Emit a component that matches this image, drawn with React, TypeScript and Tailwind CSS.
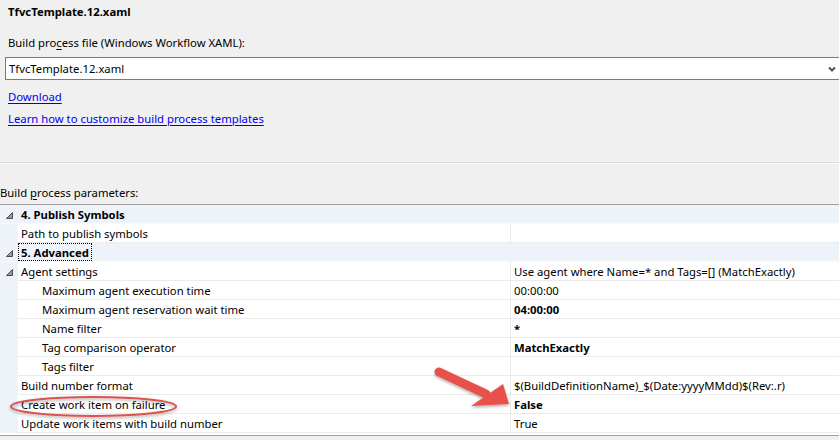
import type { ReactNode } from 'react';

type Row = {
  name: string;
  value?: string;
  bold?: boolean;
  level?: 0 | 1 | 2;
  expander?: boolean;
  category?: boolean;
  focused?: boolean;
};

const rows: Row[] = [
  { name: '4. Publish Symbols', category: true, expander: true },
  { name: 'Path to publish symbols', value: '' },
  { name: '5. Advanced', category: true, expander: true, focused: true },
  {
    name: 'Agent settings',
    value: 'Use agent where Name=* and Tags=[] (MatchExactly)',
    expander: true,
  },
  { name: 'Maximum agent execution time', value: '00:00:00', level: 1 },
  { name: 'Maximum agent reservation wait time', value: '04:00:00', level: 1, bold: true },
  { name: 'Name filter', value: '*', level: 1, bold: true },
  { name: 'Tag comparison operator', value: 'MatchExactly', level: 1, bold: true },
  { name: 'Tags filter', value: '', level: 1 },
  { name: 'Build number format', value: '$(BuildDefinitionName)_$(Date:yyyyMMdd)$(Rev:.r)' },
  { name: 'Create work item on failure', value: 'False', bold: true },
  { name: 'Update work items with build number', value: 'True' },
];

const Expander = () => (
  <svg width="7" height="7" viewBox="0 0 7 7" className="mt-[2px]">
    <polygon points="6.5,0.5 6.5,6.5 0.5,6.5" fill="#9a9a9a" stroke="#4a4a4a" strokeWidth="1" />
  </svg>
);

const GridRow = ({ row }: { row: Row }) => {
  if (row.category) {
    return (
      <div className="flex h-[19px] bg-[#eef3fa] border-b border-[#f7f9fc]">
        <div className="w-[18px] shrink-0 flex items-center justify-center">
          {row.expander && <Expander />}
        </div>
        <div className="flex items-center">
          <span
            className={
              'font-bold px-[2px] pt-[1px] leading-[15px] border ' +
              (row.focused ? 'border-dotted border-black' : 'border-transparent')
            }
          >
            {row.name}
          </span>
        </div>
      </div>
    );
  }
  return (
    <div className="flex h-[19px]">
      <div className="w-[18px] shrink-0 bg-[#eef3fa] flex items-center justify-center">
        {row.expander && <Expander />}
      </div>
      <div
        className={
          'w-[492px] shrink-0 bg-white border-b border-[#ebebeb] flex items-center pt-[2px] ' +
          (row.level === 1 ? 'pl-[24px]' : 'pl-[3px]')
        }
      >
        {row.name}
      </div>
      <div
        className={
          'flex-1 bg-white border-b border-l border-[#ebebeb] flex items-center pt-[2px] pl-[3px] whitespace-nowrap ' +
          (row.bold ? 'font-bold' : '')
        }
      >
        {row.value}
      </div>
    </div>
  );
};

const Link = ({ children }: { children: ReactNode }) => (
  <a href="#" className="text-[#0000ee] underline underline-offset-[2px] leading-[16px]">
    {children}
  </a>
);

export default function App() {
  return (
    <div className="relative w-[839px] h-[440px] overflow-hidden bg-[#f0f0f0] text-black text-[11.3px] leading-[16px] font-['Segoe_UI','Noto_Sans',sans-serif]">
      {/* Template header */}
      <div className="pl-[8px] pt-[4px]">
        <div className="font-bold">TfvcTemplate.12.xaml</div>
        <div className="mt-[15px]">
          Build pro<span className="underline underline-offset-[2px]">c</span>ess file (Windows Workflow XAML):
        </div>
        <div className="mt-[6px] -ml-[3px] w-[840px] h-[23px] bg-white border border-[#7a7a7a] flex items-center justify-between pl-[3px] pr-[8px]">
          <span className="pt-[1px]">TfvcTemplate.12.xaml</span>
          <svg width="8" height="6" viewBox="0 0 8 6">
            <path d="M1 1.5 L4 4.5 L7 1.5" fill="none" stroke="#555" strokeWidth="2" />
          </svg>
        </div>
        <div className="mt-[9px] flex flex-col items-start gap-[6px]">
          <Link>Download</Link>
          <Link>Learn how to customize build process templates</Link>
        </div>
      </div>

      <div className="mt-[35px] h-[1px] bg-[#d6dde4]" />
      <div className="h-[1px] bg-[#fafbfc]" />

      {/* Parameters grid */}
      <div className="mt-[21px]">
        Build <span className="underline underline-offset-[2px]">p</span>rocess parameters:
      </div>
      <div className="mt-[3px] border-t border-[#a0a0a0]">
        {rows.map((row) => (
          <GridRow key={row.name} row={row} />
        ))}
        <div className="h-[2px] bg-white" />
      </div>
      <div className="border-t border-[#a0a0a0]" />

      {/* Annotation overlay */}
      <svg className="absolute inset-0 pointer-events-none" width="839" height="440" viewBox="0 0 839 440">
        <defs>
          <filter id="shadow" x="-20%" y="-50%" width="140%" height="200%">
            <feDropShadow dx="0" dy="1.5" stdDeviation="1.5" floodColor="#000" floodOpacity="0.35" />
          </filter>
        </defs>
        <ellipse cx="93.5" cy="406.5" rx="82.5" ry="9.5" fill="none" stroke="#d9534f" strokeWidth="2" filter="url(#shadow)" />
        <g filter="url(#shadow)" fill="#e8514a">
          <line x1="439" y1="372" x2="486" y2="394" stroke="#e8514a" strokeWidth="9" strokeLinecap="round" />
          <polygon points="503,384 509,404 471,406" />
        </g>
      </svg>
    </div>
  );
}
